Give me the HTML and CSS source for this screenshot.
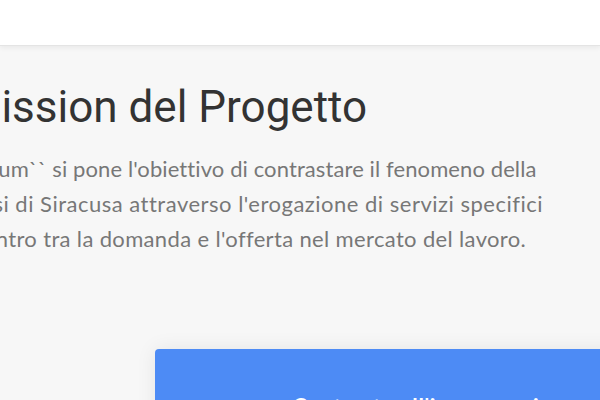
FILE: index.html
```html
<!DOCTYPE html>
<html>

<head>
    <meta charset="utf-8" />
    <title>Mission del Progetto</title>
    <link rel="stylesheet" href="styles.css">
</head>

<body>
    <div id="header"></div>

    <div id="main">
        <h1 class="title">Mission del Progetto</h1>
        <p class="intro">
            <span class="l1">Forum`` si pone l'obiettivo di contrastare il fenomeno della</span>
            <span class="l2">paesi di Siracusa attraverso l'erogazione di servizi specifici</span>
            <span class="l3">incontro tra la domanda e l'offerta nel mercato del lavoro.</span>
        </p>

        <div class="cards">
            <div class="card">
                <h3>Contrasto all'inoccupazione</h3>
            </div>
        </div>
    </div>
</body>

</html>
```

FILE: styles.css
```css
body,
h1,
h3,
p {
    margin: 0;
    padding: 0;
}

body {
    background: #f7f7f7;
    overflow: hidden;
    font-family: Lato, "Liberation Sans", sans-serif;
}

#header {
    height: 45px;
    background: #fff;
    border-bottom: 1px solid #e4e4e4;
    box-shadow: 0 2px 5px rgba(0, 0, 0, 0.06);
}

#main {
    margin-left: -34px;
    padding-top: 35px;
}

.title {
    font-family: Roboto, "Liberation Sans", sans-serif;
    font-size: 44px;
    font-weight: 400;
    line-height: 52px;
    color: #333;
    white-space: nowrap;
    text-indent: -3px;
}

.intro {
    margin-top: 18px;
    font-size: 22px;
    letter-spacing: 0.5px;
    line-height: 35px;
    color: #777;
}

.intro span {
    display: block;
    white-space: nowrap;
}

/* le righe hanno larghezze diverse rispetto al font originale */
.intro .l1 {
    letter-spacing: 0.1px;
}

.intro .l2 {
    text-indent: -9px;
}

.intro .l3 {
    text-indent: -12px;
    letter-spacing: 0.35px;
}

.cards {
    margin-top: 93px;
    padding-left: 189px;
}

.card {
    width: 560px;
    height: 140px;
    padding-top: 44px;
    background: #4d8bf5;
    border-radius: 4px;
    box-shadow: 0 0 20px rgba(0, 0, 0, 0.08);
    text-align: center;
}

.card h3 {
    font-size: 22px;
    font-weight: 700;
    letter-spacing: 0.6px;
    color: #fff;
    white-space: nowrap;
}
```
